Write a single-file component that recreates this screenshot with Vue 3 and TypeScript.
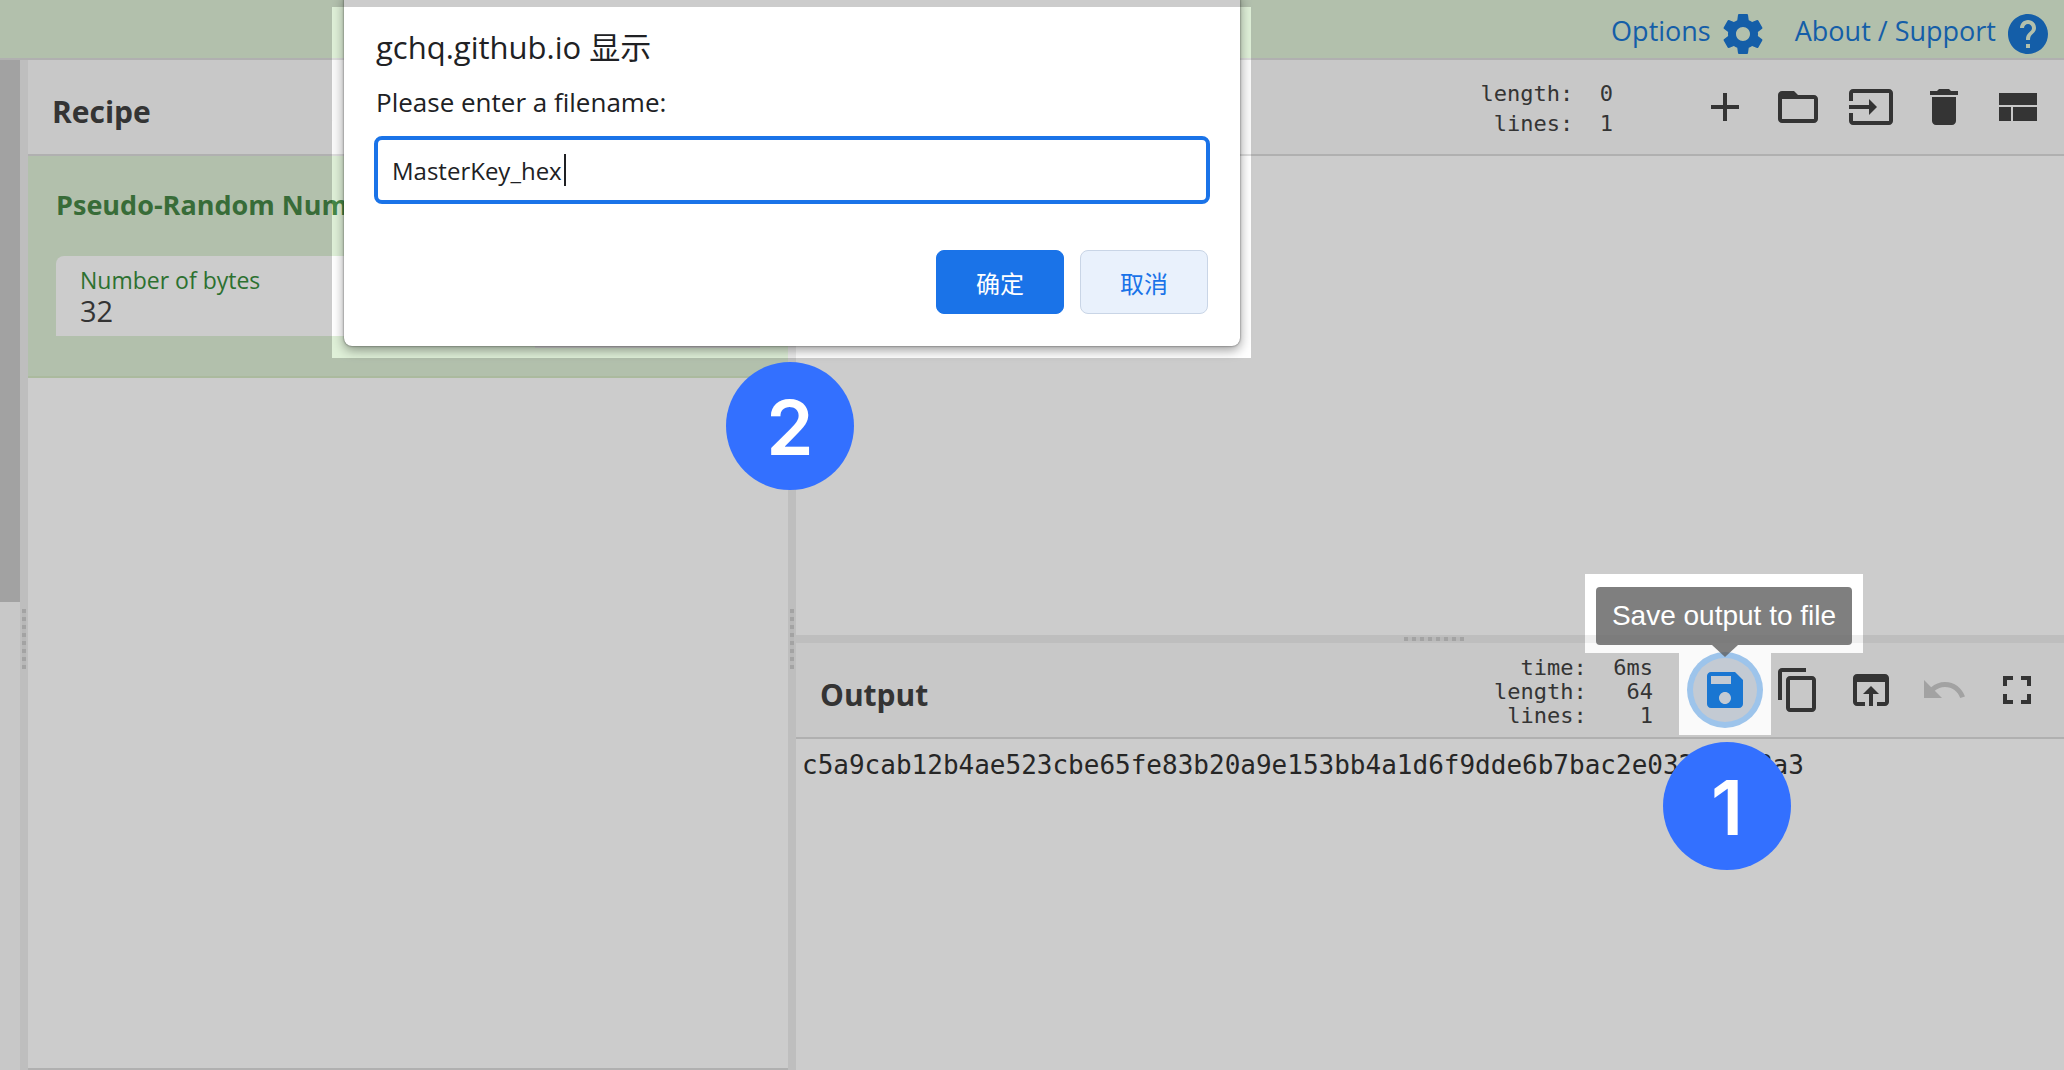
<script setup lang="ts">
import { computed, ref } from 'vue'

interface Icon {
  label: string
  path: string
  state?: 'active' | 'disabled'
}

const inputIcons: Icon[] = [
  { label: 'Add a new input tab', path: 'M19 13h-6v6h-2v-6H5v-2h6V5h2v6h6v2z' },
  {
    label: 'Open folder as input',
    path: 'M20 6h-8l-2-2H4c-1.1 0-1.99.9-1.99 2L2 18c0 1.1.9 2 2 2h16c1.100 0 2-.9 2-2V8c0-1.100-.9-2-2-2zm0 12H4V8h16v10z',
  },
  {
    label: 'Open file as input',
    path: 'M21 3.010H3c-1.100 0-2 .9-2 2V9h2V4.990h18v14.030H3V15H1v4.010c0 1.100.9 1.980 2 1.980h18c1.100 0 2-.88 2-1.980v-14c0-1.110-.9-2-2-2zM11 16l4-4-4-4v3H1v2h10v3z',
  },
  {
    label: 'Clear input and output',
    path: 'M6 19c0 1.100.9 2 2 2h8c1.100 0 2-.9 2-2V7H6v12zM19 4h-3.500l-1-1h-5l-1 1H5v2h14V4z',
  },
  { label: 'Reset pane layout', path: 'M10 19h12v-7H10v7zM3 19h6v-7H3v7zM3 5v6h19V5H3z' },
]

const outputIcons: Icon[] = [
  {
    label: 'Save output to file',
    state: 'active',
    path: 'M17 3H5c-1.110 0-2 .9-2 2v14c0 1.100.89 2 2 2h14c1.100 0 2-.9 2-2V7l-4-4zm-5 16c-1.660 0-3-1.340-3-3s1.340-3 3-3 3 1.340 3 3-1.340 3-3 3zm3-10H5V5h10v4z',
  },
  {
    label: 'Copy raw output',
    path: 'M16 1H4c-1.100 0-2 .9-2 2v14h2V3h12V1zm3 4H8c-1.100 0-2 .9-2 2v14c0 1.100.9 2 2 2h11c1.100 0 2-.9 2-2V7c0-1.100-.9-2-2-2zm0 16H8V7h11v14z',
  },
  {
    label: 'Replace input with output',
    path: 'M19 4H5c-1.110 0-2 .9-2 2v12c0 1.100.89 2 2 2h4v-2H5V8h14v10h-4v2h4c1.100 0 2-.9 2-2V6c0-1.100-.89-2-2-2zm-7 6l-4 4h3v6h2v-6h3l-4-4z',
  },
  {
    label: 'Undo',
    state: 'disabled',
    path: 'M12.500 8c-2.650 0-5.050.99-6.900 2.600L2 7v9h9l-3.620-3.620c1.390-1.160 3.160-1.880 5.120-1.880 3.540 0 6.550 2.310 7.600 5.500l2.370-.78C21.080 11.030 17.150 8 12.500 8z',
  },
  {
    label: 'Maximise output pane',
    path: 'M7 14H5v5h5v-2H7v-3zm-2-4h2V7h3V5H5v5zm12 7h-3v2h5v-5h-2v3zM14 5v2h3v3h2V5h-5z',
  },
]

const byteCount = ref('32')
const filename = ref('MasterKey_hex')
const output = ref('c5a9cab12b4ae523cbe65fe83b20a9e153bb4a1d6f9dde6b7bac2e0326f1d8a3')

const outputStats = computed(() =>
  [
    ['time', '6ms'],
    ['length', String(output.value.length)],
    ['lines', '1'],
  ]
    .map(([k, v]) => `${k}:`.padStart(7) + v.padStart(5))
    .join('\n'),
)
const inputStats = 'length:  0\n lines:  1'
</script>

<template>
  <div class="app">
    <header class="banner">
      <a href="#options">
        Options
        <svg viewBox="0 0 24 24" aria-hidden="true">
          <path d="M19.430 12.980c.04-.32.07-.64.07-.98s-.03-.66-.07-.98l2.110-1.650c.19-.15.24-.42.12-.64l-2-3.460c-.12-.22-.39-.3-.61-.22l-2.490 1c-.52-.4-1.080-.73-1.690-.98l-.38-2.650C14.460 2.180 14.250 2 14 2h-4c-.25 0-.46.18-.49.42l-.38 2.650c-.61.25-1.170.59-1.690.98l-2.490-1c-.23-.09-.49 0-.61.22l-2 3.460c-.13.22-.07.49.12.64l2.110 1.650c-.04.32-.07.65-.07.98s.03.66.07.98l-2.110 1.650c-.19.15-.24.42-.12.64l2 3.460c.12.22.39.3.61.22l2.490-1c.52.4 1.080.73 1.690.98l.38 2.650c.03.24.24.42.49.42h4c.25 0 .46-.18.49-.42l.38-2.650c.61-.25 1.170-.59 1.690-.98l2.490 1c.23.09.49 0 .61-.22l2-3.460c.12-.22.07-.49-.12-.64l-2.110-1.650zM12 15.500c-1.930 0-3.500-1.570-3.500-3.500s1.570-3.500 3.500-3.500 3.500 1.570 3.500 3.500-1.570 3.500-3.500 3.500z" />
        </svg>
      </a>
      <a href="#support">
        About / Support
        <svg viewBox="0 0 24 24" aria-hidden="true">
          <path d="M12 2C6.480 2 2 6.480 2 12s4.480 10 10 10 10-4.480 10-10S17.520 2 12 2zm1 17h-2v-2h2v2zm2.070-7.750l-.9.920C13.450 12.900 13 13.500 13 15h-2v-.5c0-1.100.45-2.100 1.170-2.830l1.240-1.260c.37-.36.59-.86.59-1.410 0-1.100-.9-2-2-2s-2 .9-2 2H8c0-2.210 1.790-4 4-4s4 1.790 4 4c0 .88-.36 1.680-.93 2.250z" />
        </svg>
      </a>
    </header>

    <main class="workspace">
      <div class="operations"><div class="scroll-thumb"></div></div>
      <div class="gutter vertical"><i></i></div>

      <section class="recipe">
        <div class="title-bar"><h2>Recipe</h2></div>
        <article class="operation">
          <h3>Pseudo-Random Number Generator</h3>
          <div class="args">
            <div class="arg">
              <label for="byte-count">Number of bytes</label>
              <input id="byte-count" v-model="byteCount" type="text" />
            </div>
            <div class="arg second"></div>
          </div>
        </article>
      </section>

      <div class="gutter vertical"><i></i></div>

      <div class="io">
        <section class="pane">
          <div class="title-bar">
            <h2>Input</h2>
            <pre class="stats tall">{{ inputStats }}</pre>
            <div class="tools">
              <button v-for="icon in inputIcons" :key="icon.label" type="button" :aria-label="icon.label">
                <svg viewBox="0 0 24 24"><path :d="icon.path" /></svg>
              </button>
            </div>
          </div>
        </section>
        <div class="gutter horizontal"><i></i></div>
        <section class="pane lower">
          <div class="title-bar">
            <h2>Output</h2>
            <pre class="stats">{{ outputStats }}</pre>
            <div class="tools">
              <button
                v-for="icon in outputIcons"
                :key="icon.label"
                type="button"
                :class="icon.state"
                :disabled="icon.state === 'disabled'"
                :aria-label="icon.label"
              >
                <svg viewBox="0 0 24 24"><path :d="icon.path" /></svg>
                <span v-if="icon.state === 'active'" class="tooltip" role="tooltip">{{ icon.label }}</span>
              </button>
            </div>
          </div>
          <div class="output-text">{{ output }}</div>
        </section>
      </div>
    </main>

    <form class="dialog" role="dialog" aria-labelledby="dialog-title" @submit.prevent>
      <h1 id="dialog-title">gchq.github.io 显示</h1>
      <label for="filename">Please enter a filename:</label>
      <div class="field">
        <input id="filename" v-model="filename" type="text" autocomplete="off" spellcheck="false" />
        <span class="caret"></span>
      </div>
      <div class="actions">
        <button type="submit" class="primary">确定</button>
        <button type="button">取消</button>
      </div>
    </form>

    <div class="dim"></div>
    <div class="step two">2</div>
    <div class="step one">1</div>
  </div>
</template>

<style>
body {
  margin: 0;
}
</style>

<style scoped>
* {
  box-sizing: border-box;
}
.app {
  position: relative;
  display: flex;
  flex-direction: column;
  min-height: 100vh;
  overflow: hidden;
  background: #fff;
  color: #424242;
  font-family: 'Open Sans', 'Noto Sans', 'Noto Sans CJK SC', sans-serif;
}
h1,
h2,
h3,
pre {
  margin: 0;
}
button,
input {
  font-family: inherit;
}
svg {
  display: block;
  width: 48px;
  height: 48px;
  fill: currentColor;
}

.banner {
  display: flex;
  justify-content: flex-end;
  gap: 28px;
  height: 60px;
  padding-right: 12px;
  border-bottom: 2px solid #ddd;
  background: #dff0d8;
}
.banner a {
  display: flex;
  gap: 8px;
  height: 64px;
  color: #1976d2;
  font-size: 27px;
  line-height: 62px;
  text-decoration: none;
}
.banner svg {
  margin-top: 10px;
}

.workspace {
  flex: 1;
  display: grid;
  grid-template-columns: 20px 8px 760fr 8px 1268fr;
}
.operations {
  background: #fafafa;
}
.scroll-thumb {
  height: 542px;
  background: #cbcbcb;
}
.gutter {
  display: flex;
  justify-content: center;
  background: #eee;
}
.gutter.vertical {
  align-items: flex-start;
}
.gutter.vertical i {
  width: 4px;
  height: 60px;
  margin-top: 549px;
  background: repeating-linear-gradient(to bottom, #ccc 0 4px, #e6e6e6 4px 8px);
}
.gutter.horizontal {
  align-items: center;
  height: 8px;
  padding-left: 8px;
}
.gutter.horizontal i {
  width: 60px;
  height: 4px;
  background: repeating-linear-gradient(to right, #ccc 0 4px, #e6e6e6 4px 8px);
}

.title-bar {
  display: flex;
  align-items: center;
  height: 96px;
  padding: 0 15px 0 24px;
  border-bottom: 2px solid #ddd;
  background: #fafafa;
}
h2 {
  flex: 1;
  padding-top: 10px;
  font-size: 30px;
  line-height: 40px;
  font-weight: 700;
}
.recipe {
  border-bottom: 2px solid #ddd;
}
.operation {
  height: 222px;
  padding: 28px;
  border-bottom: 2px solid #d6e9c6;
  background: #dff0d8;
}
h3 {
  height: 72px;
  color: #468847;
  font-size: 27px;
  line-height: 42px;
  font-weight: 700;
  white-space: nowrap;
}
.args {
  display: flex;
  align-items: flex-start;
  gap: 12px;
}
.arg {
  display: flex;
  flex: 467 1 467px;
  flex-direction: column;
  height: 80px;
  padding: 8px 24px 0;
  border-radius: 8px 8px 0 0;
  background: #fff;
}
.arg.second {
  flex: 225 1 225px;
  height: 92px;
  border-bottom: 2px solid #ddd;
}
.arg label {
  color: #388e3c;
  font-size: 23px;
  line-height: 32px;
}
.arg input {
  width: 100%;
  height: 30px;
  padding: 0;
  border: 0;
  background: transparent;
  color: #424242;
  font-size: 29px;
  line-height: 30px;
}

.io {
  display: flex;
  flex-direction: column;
}
.pane {
  flex: 575;
}
.pane.lower {
  flex: 427;
}
.stats {
  padding-top: 4px;
  margin-right: 40px;
  font-family: 'DejaVu Sans Mono', monospace;
  font-size: 22px;
  line-height: 24px;
}
.stats.tall {
  margin-right: 80px;
  line-height: 30px;
}
.tools {
  display: flex;
  gap: 9px;
}
.tools button {
  position: relative;
  width: 64px;
  height: 64px;
  padding: 8px;
  border: 0;
  border-radius: 50%;
  background: transparent;
  color: #424242;
}
.tools .disabled {
  color: #cbcbcb;
}
.tools .active {
  background: #c3cad3;
  box-shadow: 0 0 0 6px #9dc4eb;
  color: #1976d2;
}
.tooltip {
  position: absolute;
  bottom: 77px;
  left: 50%;
  width: 256px;
  margin-left: -129px;
  border-radius: 4px;
  background: rgba(95, 95, 95, 0.8);
  color: #fff;
  font-family: 'Liberation Sans', sans-serif;
  font-size: 28px;
  line-height: 58px;
  text-align: center;
  white-space: nowrap;
}
.tooltip::after {
  content: '';
  position: absolute;
  top: 100%;
  left: 50%;
  margin-left: -12px;
  border: 13px solid transparent;
  border-top: 12px solid rgba(95, 95, 95, 0.8);
  border-bottom: 0;
}
.output-text {
  padding: 8px 6px;
  color: #303030;
  font-family: 'DejaVu Sans Mono', monospace;
  font-size: 26px;
  line-height: 36px;
}

.dialog {
  position: absolute;
  top: -8px;
  left: 344px;
  width: 896px;
  height: 354px;
  padding: 32px 30px 32px;
  border-radius: 8px;
  background: #fff;
  box-shadow: 0 0 2px rgba(0, 0, 0, 0.6), 0 4px 12px rgba(0, 0, 0, 0.4);
  color: #202124;
}
.dialog h1 {
  padding-left: 2px;
  font-size: 31px;
  line-height: 46px;
  font-weight: 400;
}
.dialog label {
  display: block;
  padding: 14px 2px 16px;
  font-size: 26px;
  line-height: 36px;
}
.field {
  position: relative;
}
.field input {
  display: block;
  width: 100%;
  height: 68px;
  padding: 0 14px;
  border: 4px solid #1a73e8;
  border-radius: 8px;
  outline: 0;
  background: #fff;
  color: #202124;
  font-size: 24px;
}
.caret {
  position: absolute;
  top: 18px;
  left: 190px;
  width: 2px;
  height: 32px;
  background: #202124;
}
.actions {
  display: flex;
  justify-content: flex-end;
  gap: 16px;
  padding: 46px 2px 0;
}
.actions button {
  width: 128px;
  height: 64px;
  border: 1px solid #c9d5e6;
  border-radius: 8px;
  background: #e9f1fc;
  color: #1a73e8;
  font-size: 24px;
}
.actions .primary {
  border-color: #1a73e8;
  background: #1a73e8;
  color: #fff;
}

/* Darkens everything except the dialog, the tooltip and the save button. */
.dim {
  position: absolute;
  inset: 0;
  pointer-events: none;
  background: rgba(0, 0, 0, 0.2);
  clip-path: polygon(
    evenodd,
    0 0, 100% 0, 100% 100%, 0 100%, 0 0,
    332px 7px, 1251px 7px, 1251px 358px, 332px 358px, 332px 7px,
    0 0,
    calc(100% - 479px) 574px, calc(100% - 201px) 574px, calc(100% - 201px) 653px,
    calc(100% - 293px) 653px, calc(100% - 293px) 735px, calc(100% - 385px) 735px,
    calc(100% - 385px) 653px, calc(100% - 479px) 653px, calc(100% - 479px) 574px,
    0 0
  );
}
.step {
  position: absolute;
  width: 128px;
  height: 128px;
  border-radius: 50%;
  background: #3370ff;
  color: #fff;
  font-family: Inter, sans-serif;
  font-size: 76px;
  line-height: 130px;
  font-weight: 600;
  text-align: center;
}
.step.two {
  top: 362px;
  left: 726px;
}
.step.one {
  top: 742px;
  right: 273px;
}
</style>
